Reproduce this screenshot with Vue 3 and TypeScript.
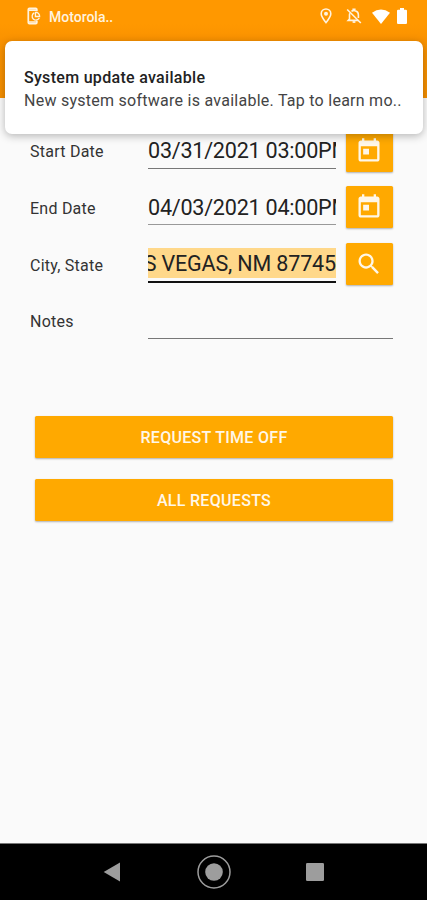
<script setup lang="ts">
interface Field {
  id: string
  label: string
  value: string
  icon: 'calendar' | 'search' | null
}

const fields: Field[] = [
  { id: 'start', label: 'Start Date', value: '03/31/2021 03:00PM', icon: 'calendar' },
  { id: 'end', label: 'End Date', value: '04/03/2021 04:00PM', icon: 'calendar' },
  { id: 'city', label: 'City, State', value: 'LAS VEGAS, NM 87745', icon: 'search' },
  { id: 'notes', label: 'Notes', value: '', icon: null },
]

const actions: string[] = ['REQUEST TIME OFF', 'ALL REQUESTS']
</script>

<template>
  <div class="phone">
    <header class="app-bar">
      <div class="status">
        <svg class="device" viewBox="0 0 16 20" fill="none" stroke="currentColor" stroke-width="1.8">
          <path d="M11 4.5V2.6Q11 1.4 9.8 1.4H3.2Q2 1.4 2 2.6V16.4Q2 17.6 3.2 17.6H9.8Q11 17.6 11 16.4V14.5" />
          <path d="M2 3.2H11M2 15.8H11" />
          <path d="M8.2 6.2A4 4 0 1 0 13.6 11.6M9.5 5.6A4 4 0 0 1 13.9 10H9.5Z" stroke-width="1.4" />
        </svg>
        <span class="carrier">Motorola..</span>
        <svg class="pin" viewBox="0 0 12 16" fill="none" stroke="currentColor">
          <path d="M6 14.6C3.5 11.4 1.2 8.8 1.2 5.8A4.8 4.8 0 0 1 10.8 5.8C10.8 8.8 8.5 11.4 6 14.6Z" stroke-width="1.6" />
          <circle cx="6" cy="5.8" r="2" fill="currentColor" stroke="none" />
        </svg>
        <svg class="bell" viewBox="0 0 16 16" fill="none" stroke="currentColor" stroke-width="1.6">
          <path d="M3.8 5.2Q3.5 6 3.5 7V11L2.2 12.4H12.2M5.5 3.4Q6.3 2.8 7.2 2.6V1.2H8.8V2.6Q12.4 3.4 12.4 7V10" />
          <path d="M1.2 1.5L14.8 15" />
          <path d="M6.6 14H9.4" stroke-width="1.8" />
        </svg>
        <svg class="wifi" viewBox="0 0 18 15" fill="currentColor">
          <path d="M0 3.8Q9-3 18 3.8L9 15Z" />
        </svg>
        <svg class="battery" viewBox="0 0 10 16" fill="currentColor">
          <path d="M3 0H7V1.7H8.9Q10 1.7 10 2.8V14.9Q10 16 8.9 16H1.1Q0 16 0 14.9V2.8Q0 1.7 1.1 1.7H3Z" />
        </svg>
      </div>
    </header>

    <aside class="notification">
      <div class="notice-title">System update available</div>
      <div class="notice-body">New system software is available. Tap to learn mo..</div>
    </aside>

    <main class="content">
      <div class="form">
        <div v-for="f in fields" :key="f.id" class="row" :class="f.id">
          <label class="label">{{ f.label }}</label>
          <div class="input"><span class="value">{{ f.value }}</span></div>
          <button v-if="f.icon" class="icon-button">
            <svg v-if="f.icon === 'calendar'" viewBox="0 0 24 24" fill="currentColor">
              <path d="M19 3h-1V1h-2v2H8V1H6v2H5c-1.11 0-1.99.9-1.99 2L3 19c0 1.1.89 2 2 2h14c1.1 0 2-.9 2-2V5c0-1.1-.9-2-2-2zm0 16H5V8h14v11zM7 10h5v5H7z" />
            </svg>
            <svg v-else viewBox="0 0 24 24" fill="currentColor">
              <path d="M15.5 14h-.79l-.28-.27C15.41 12.59 16 11.11 16 9.5 16 5.91 13.09 3 9.5 3S3 5.91 3 9.5 5.91 16 9.5 16c1.61 0 3.09-.59 4.23-1.57l.27.28v.79l5 4.99L20.49 19l-4.99-5zm-6 0C7.01 14 5 11.99 5 9.5S7.01 5 9.5 5 14 7.01 14 9.5 11.99 14 9.5 14z" />
            </svg>
          </button>
        </div>
      </div>
      <div class="actions">
        <button v-for="a in actions" :key="a" class="action">{{ a }}</button>
      </div>
    </main>

    <nav class="nav">
      <svg class="back" viewBox="0 0 18 20"><path d="M0.7 10L17 0.6V19.4Z" fill="#9d9d9d" /></svg>
      <svg class="home" viewBox="0 0 34 34">
        <circle cx="17" cy="17" r="16" fill="none" stroke="#9d9d9d" stroke-width="1.5" />
        <circle cx="17" cy="17" r="8.8" fill="#9d9d9d" />
      </svg>
      <svg class="recent" viewBox="0 0 18 18"><rect width="18" height="18" rx="1.3" fill="#9d9d9d" /></svg>
    </nav>
  </div>
</template>

<style>
body {
  background: #fafafa;
}
</style>

<style scoped>
.phone {
  position: relative;
  display: flex;
  flex-direction: column;
  width: 427px;
  height: 900px;
  overflow: hidden;
  background: #fafafa;
  font-family: Roboto, "Liberation Sans", sans-serif;
  color: #222;
}
.app-bar {
  flex: none;
  height: 98px;
  background: linear-gradient(#ff9800 0, #ff9800 24px, #fa9200 40px, #f58f00 98px);
}
.status {
  display: flex;
  align-items: center;
  height: 32px;
  padding: 0 20px 0 26px;
  color: #fff3df;
}
.device {
  width: 16px;
  height: 19px;
}
.carrier {
  flex: 1;
  margin-left: 7px;
  padding-top: 1px;
  font-size: 14px;
  font-weight: 500;
  line-height: 32px;
}
.pin {
  width: 12px;
  height: 16px;
  margin-right: 14px;
}
.bell {
  width: 16px;
  height: 16px;
  margin-right: 10px;
}
.wifi {
  width: 18px;
  height: 15px;
  margin-right: 7px;
  color: #fff;
}
.battery {
  width: 10px;
  height: 16px;
  color: #fff;
}
.notification {
  position: absolute;
  z-index: 2;
  top: 41px;
  left: 5px;
  width: 418px;
  height: 93px;
  box-sizing: border-box;
  padding: 25px 0 0 19px;
  border-radius: 7px;
  background: #fff;
  box-shadow: 0 2px 8px rgba(0, 0, 0, 0.28);
  white-space: nowrap;
}
.notice-title {
  font-size: 16px;
  font-weight: 500;
  line-height: 24px;
  letter-spacing: 0.3px;
  color: #222;
}
.notice-body {
  font-size: 16px;
  line-height: 22px;
  letter-spacing: 0.26px;
  color: #444;
}
.content {
  flex: 1;
  padding: 31.5px 34px 0 30px;
}
.form {
  display: grid;
  grid-auto-rows: 42px;
  row-gap: 14.8px;
}
.row {
  display: grid;
  grid-template-columns: 108px 188px 47px;
  grid-template-rows: 42px;
  column-gap: 10px;
}
.label {
  padding-top: 1.5px;
  font-size: 16px;
  line-height: 42px;
  letter-spacing: 0.24px;
  color: #333;
}
.input {
  display: flex;
  align-items: flex-start;
  height: 38px;
  overflow: hidden;
  border-bottom: 1px solid #777;
  white-space: nowrap;
}
.value {
  margin-top: 7.5px;
  font-size: 21.6px;
  line-height: 28px;
  letter-spacing: -0.25px;
}
.end .input {
  border-bottom-color: #999;
}
.city .input {
  justify-content: flex-end;
  border-bottom: 2px solid #111;
}
.city .value {
  height: 29.5px;
  margin-top: 5px;
  font-size: 21.5px;
  line-height: 32px;
  letter-spacing: -0.15px;
  background: #ffd88a;
}
.notes .input {
  grid-column: 2 / 4;
}
.icon-button,
.action {
  padding: 0;
  border: 0;
  border-radius: 1.5px;
  background: #ffa900;
  color: #fff7e8;
  box-shadow: 0 1px 2px rgba(0, 0, 0, 0.3);
}
.icon-button {
  display: flex;
  align-items: center;
  justify-content: center;
}
.icon-button svg {
  width: 28px;
  height: 28px;
  margin-right: 1px;
}
.actions {
  display: grid;
  grid-auto-rows: 42px;
  row-gap: 21px;
  margin: 74px 0 0 5px;
}
.action {
  padding-top: 2px;
  font-family: inherit;
  font-size: 16px;
  font-weight: 500;
  line-height: 40px;
  letter-spacing: 0.3px;
}
.nav {
  display: flex;
  align-items: center;
  flex: none;
  height: 57px;
  box-sizing: border-box;
  padding-left: 103px;
  border-top: 1px solid #777;
  background: #000;
}
.back {
  width: 18px;
  height: 20px;
}
.home {
  width: 34px;
  height: 34px;
  margin-left: 76px;
}
.recent {
  width: 18px;
  height: 18px;
  margin-left: 75px;
}
</style>
